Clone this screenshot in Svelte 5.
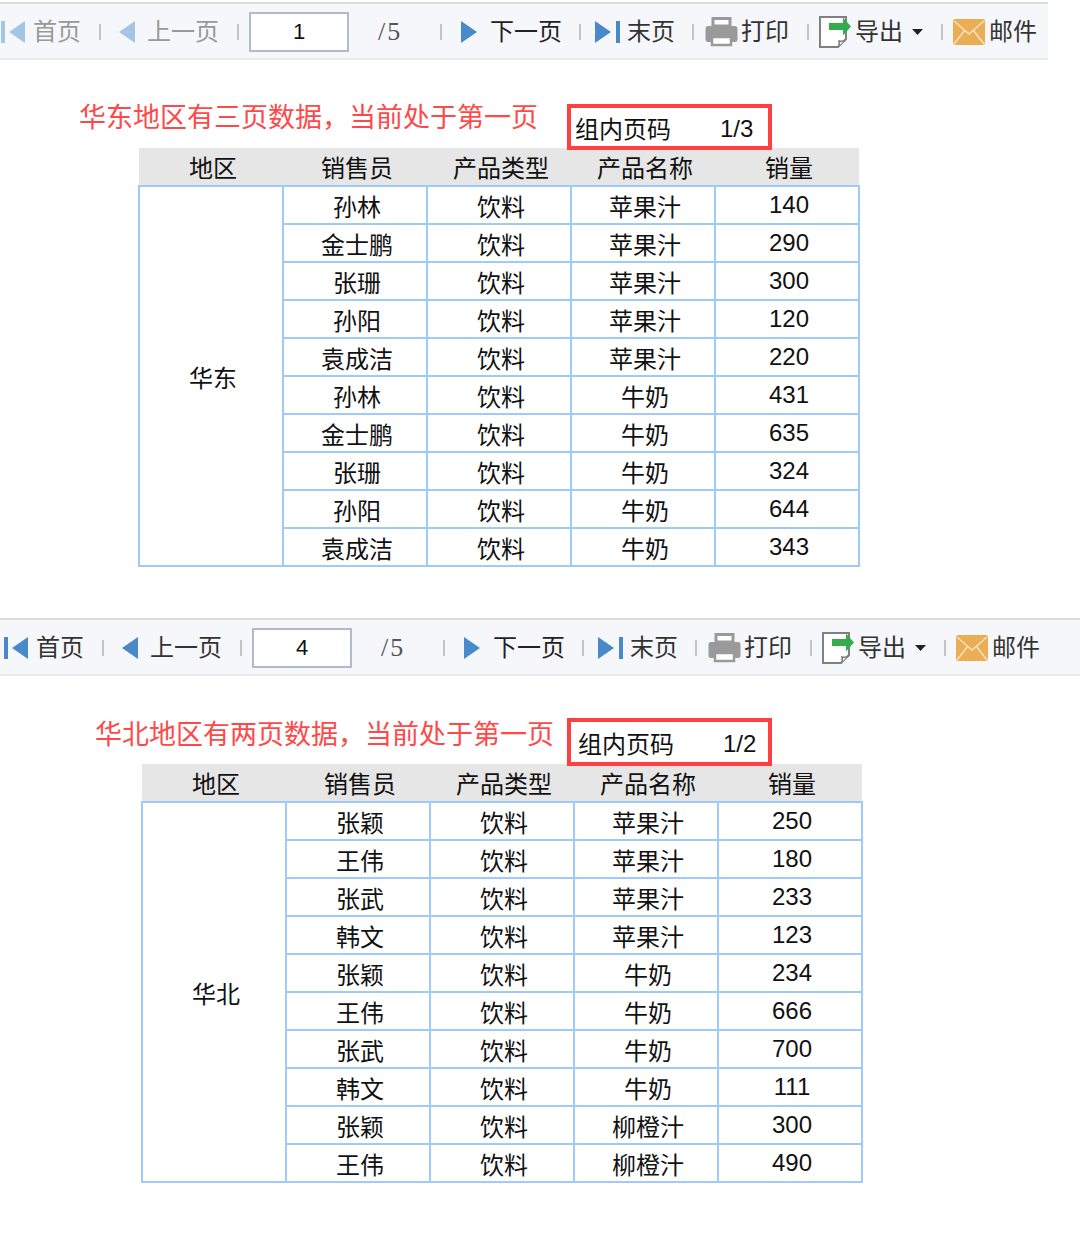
<script>
    const east = {
        name: '华东',
        page: 1,
        title: '华东地区有三页数据，当前处于第一页',
        group: '1/3',
        rows: [
            ['孙林', '苹果汁', 140], ['金士鹏', '苹果汁', 290], ['张珊', '苹果汁', 300],
            ['孙阳', '苹果汁', 120], ['袁成洁', '苹果汁', 220], ['孙林', '牛奶', 431],
            ['金士鹏', '牛奶', 635], ['张珊', '牛奶', 324], ['孙阳', '牛奶', 644], ['袁成洁', '牛奶', 343]
        ]
    };
    const north = {
        name: '华北',
        page: 4,
        title: '华北地区有两页数据，当前处于第一页',
        group: '1/2',
        rows: [
            ['张颖', '苹果汁', 250], ['王伟', '苹果汁', 180], ['张武', '苹果汁', 233],
            ['韩文', '苹果汁', 123], ['张颖', '牛奶', 234], ['王伟', '牛奶', 666],
            ['张武', '牛奶', 700], ['韩文', '牛奶', 111], ['张颖', '柳橙汁', 300], ['王伟', '柳橙汁', 490]
        ]
    };
</script>

{#snippet toolbar(page)}
    <div class="toolbar">
        <div class="nav" class:disabled={page === 1}>
            <svg width="24" height="24" viewBox="0 0 24 24"><rect x="0" y="1" width="4" height="22" /><path d="M8 12 L24 1 V23 Z" /></svg>
            <span class="label">首页</span>
        </div>
        <i class="sep"></i>
        <div class="nav prev" class:disabled={page === 1}>
            <svg width="16" height="24" viewBox="0 0 16 24"><path d="M0 12 L16 1 V23 Z" /></svg>
            <span class="label prev-label">上一页</span>
        </div>
        <i class="sep"></i>
        <input class="page-input" value={page} readonly />
        <span class="total">/5</span>
        <i class="sep after-total"></i>
        <div class="nav next">
            <svg width="17" height="24" viewBox="0 0 17 24"><path d="M17 12 L1 1 V23 Z" /></svg>
            <span class="label next-label">下一页</span>
        </div>
        <i class="sep tight"></i>
        <div class="nav last">
            <svg width="25" height="24" viewBox="0 0 25 24"><path d="M16 12 L0 1 V23 Z" /><rect x="21" y="1" width="4" height="22" /></svg>
            <span class="label last-label">末页</span>
        </div>
        <i class="sep tight"></i>
        <div class="nav printer">
            <svg width="33" height="30" viewBox="0 0 33 30">
                <path d="M8 1.500 H25 V9 H8 Z" fill="#fff" stroke="#9a9a9a" stroke-width="3" />
                <path d="M3 9 H30 Q32.500 9 32.500 12 V23 Q32.500 25 30 25 H27 V20 H6 V25 H3 Q0.500 25 0.500 23 V12 Q0.500 9 3 9 Z" fill="#9a9a9a" />
                <path d="M7 20 H26 V28 H7 Z" fill="#fff" stroke="#9a9a9a" stroke-width="2.500" />
            </svg>
            <span class="label print-label">打印</span>
        </div>
        <i class="sep"></i>
        <div class="nav">
            <svg width="32" height="32" viewBox="0 0 32 32">
                <path d="M1 1 H27 V23 L19 31 H1 Z" fill="#fff" stroke="#808080" stroke-width="2" />
                <path d="M27 23 Q26 26 20 25 Q21 29 19 31" fill="#eee" stroke="#808080" stroke-width="1.500" />
                <path d="M10 7 H24 V1.500 L32 10.500 L24 19.500 V14 H10 Z" fill="#35ac4b" />
            </svg>
            <span class="label side-label">导出</span>
            <svg class="caret" width="11" height="6" viewBox="0 0 11 6"><path d="M0 0 H11 L5.500 6 Z" fill="#222" /></svg>
        </div>
        <i class="sep"></i>
        <div class="nav">
            <svg width="32" height="26" viewBox="0 0 32 26">
                <rect width="32" height="26" rx="2" fill="#ebae55" />
                <path d="M1 2 L16 15 L31 2 M1 25 L12 11 M31 25 L20 11" fill="none" stroke="#f8e3c0" stroke-width="1.500" />
            </svg>
            <span class="label side-label">邮件</span>
        </div>
    </div>
{/snippet}

{#snippet report(data)}
    <div class="title-row">
        <div class="title">{data.title}</div>
        <div class="group-box">
            <span>组内页码</span>
            <span class="num">{data.group}</span>
        </div>
    </div>
    <table>
        <colgroup>
            <col /><col /><col /><col /><col />
        </colgroup>
        <thead>
            <tr>
                <th>地区</th>
                <th>销售员</th>
                <th>产品类型</th>
                <th>产品名称</th>
                <th>销量</th>
            </tr>
        </thead>
        <tbody>
            {#each data.rows as row, i}
                <tr>
                    {#if i === 0}
                        <td rowspan={data.rows.length}>{data.name}</td>
                    {/if}
                    <td>{row[0]}</td>
                    <td>饮料</td>
                    <td>{row[1]}</td>
                    <td class="num">{row[2]}</td>
                </tr>
            {/each}
        </tbody>
    </table>
{/snippet}

<div class="page">
    <section class="east">
        {@render toolbar(east.page)}
        {@render report(east)}
    </section>
    <section class="north">
        {@render toolbar(north.page)}
        {@render report(north)}
    </section>
</div>

<style>
    :global(body) {
        margin: 0;
        background: #fff;
    }

    .page {
        width: 1080px;
        height: 1256px;
        padding-top: 2px;
        box-sizing: border-box;
        overflow: hidden;
        font-family: "Liberation Sans", "Noto Sans CJK SC", sans-serif;
        color: #111;
    }

    section.east {
        height: 616px;
    }

    .toolbar {
        display: flex;
        align-items: center;
        height: 58px;
        padding-top: 2px;
        box-sizing: border-box;
        background: #f5f7fa;
        border-top: 2px solid #dcdcdc;
        border-bottom: 2px solid #e8e9ec;
        font-size: 24px;
        color: #333;
    }

    .east .toolbar {
        width: 1048px;
        padding-left: 1px;
    }

    .north .toolbar {
        width: 1080px;
        padding-left: 4px;
    }

    .nav {
        display: flex;
        align-items: center;
        flex: none;
    }

    .nav svg {
        flex: none;
        fill: #4a8acb;
    }

    .nav.disabled svg {
        fill: #a5c5e6;
    }

    .label {
        margin-left: 8px;
        line-height: 30px;
    }

    .prev-label {
        margin-left: 12px;
    }

    .next-label {
        margin-left: 13px;
        color: #222;
    }

    .last-label {
        margin-left: 7px;
    }

    .print-label {
        margin-left: 3px;
    }

    .side-label {
        margin-left: 4px;
    }

    .nav.disabled .label {
        color: #999;
    }

    .caret {
        margin-left: 9px;
    }

    .sep {
        flex: none;
        width: 2px;
        height: 16px;
        margin: 0 10px 0 18px;
        background: #c4c4c4;
    }

    .sep.tight {
        margin-left: 17px;
    }

    .prev,
    .next {
        margin-left: 8px;
    }

    .last {
        margin-left: 4px;
    }

    .printer {
        margin-left: 1px;
    }

    .page-input {
        flex: none;
        width: 100px;
        height: 40px;
        box-sizing: border-box;
        border: 2px solid #b4bacd;
        background: #fff;
        padding: 0;
        text-align: center;
        font-family: "Liberation Sans", sans-serif;
        font-size: 22px;
        color: #111;
    }

    .total {
        margin-left: 29px;
        width: 22px;
        font-family: "Liberation Serif", serif;
        font-size: 26px;
        letter-spacing: 2px;
        color: #555;
    }

    .after-total {
        margin-left: 40px;
    }

    .title-row {
        display: flex;
        align-items: center;
        height: 46px;
        margin: 44px 0 -2px;
        position: relative;
    }

    .north .title-row {
        height: 48px;
        margin-top: 42px;
    }

    .title {
        margin: 0 0 24px 79px;
        font-size: 27px;
        color: #ff4848;
    }

    .north .title {
        margin: 0 0 20px 95px;
    }

    .group-box {
        position: absolute;
        left: 567px;
        top: 0;
        bottom: 0;
        width: 205px;
        box-sizing: border-box;
        padding-left: 4px;
        border: 4px solid #ff4040;
        font-size: 24px;
        color: #111;
        display: flex;
        align-items: center;
    }

    .north .group-box {
        padding-left: 7px;
    }

    .group-box .num {
        margin-left: 49px;
        padding-top: 4px;
    }

    table {
        border-collapse: collapse;
        table-layout: fixed;
        width: 722px;
        margin-left: 138px;
        font-size: 24px;
        color: #111;
    }

    .north table {
        margin-left: 141px;
    }

    col {
        width: 144px;
    }

    th {
        height: 37px;
        padding: 0 0 0 4px;
        font-weight: 400;
        background: #e6e6e6;
    }

    td {
        height: 38px;
        padding: 0 0 0 4px;
        box-sizing: border-box;
        border: 2px solid #9ecbfa;
        text-align: center;
    }
</style>
